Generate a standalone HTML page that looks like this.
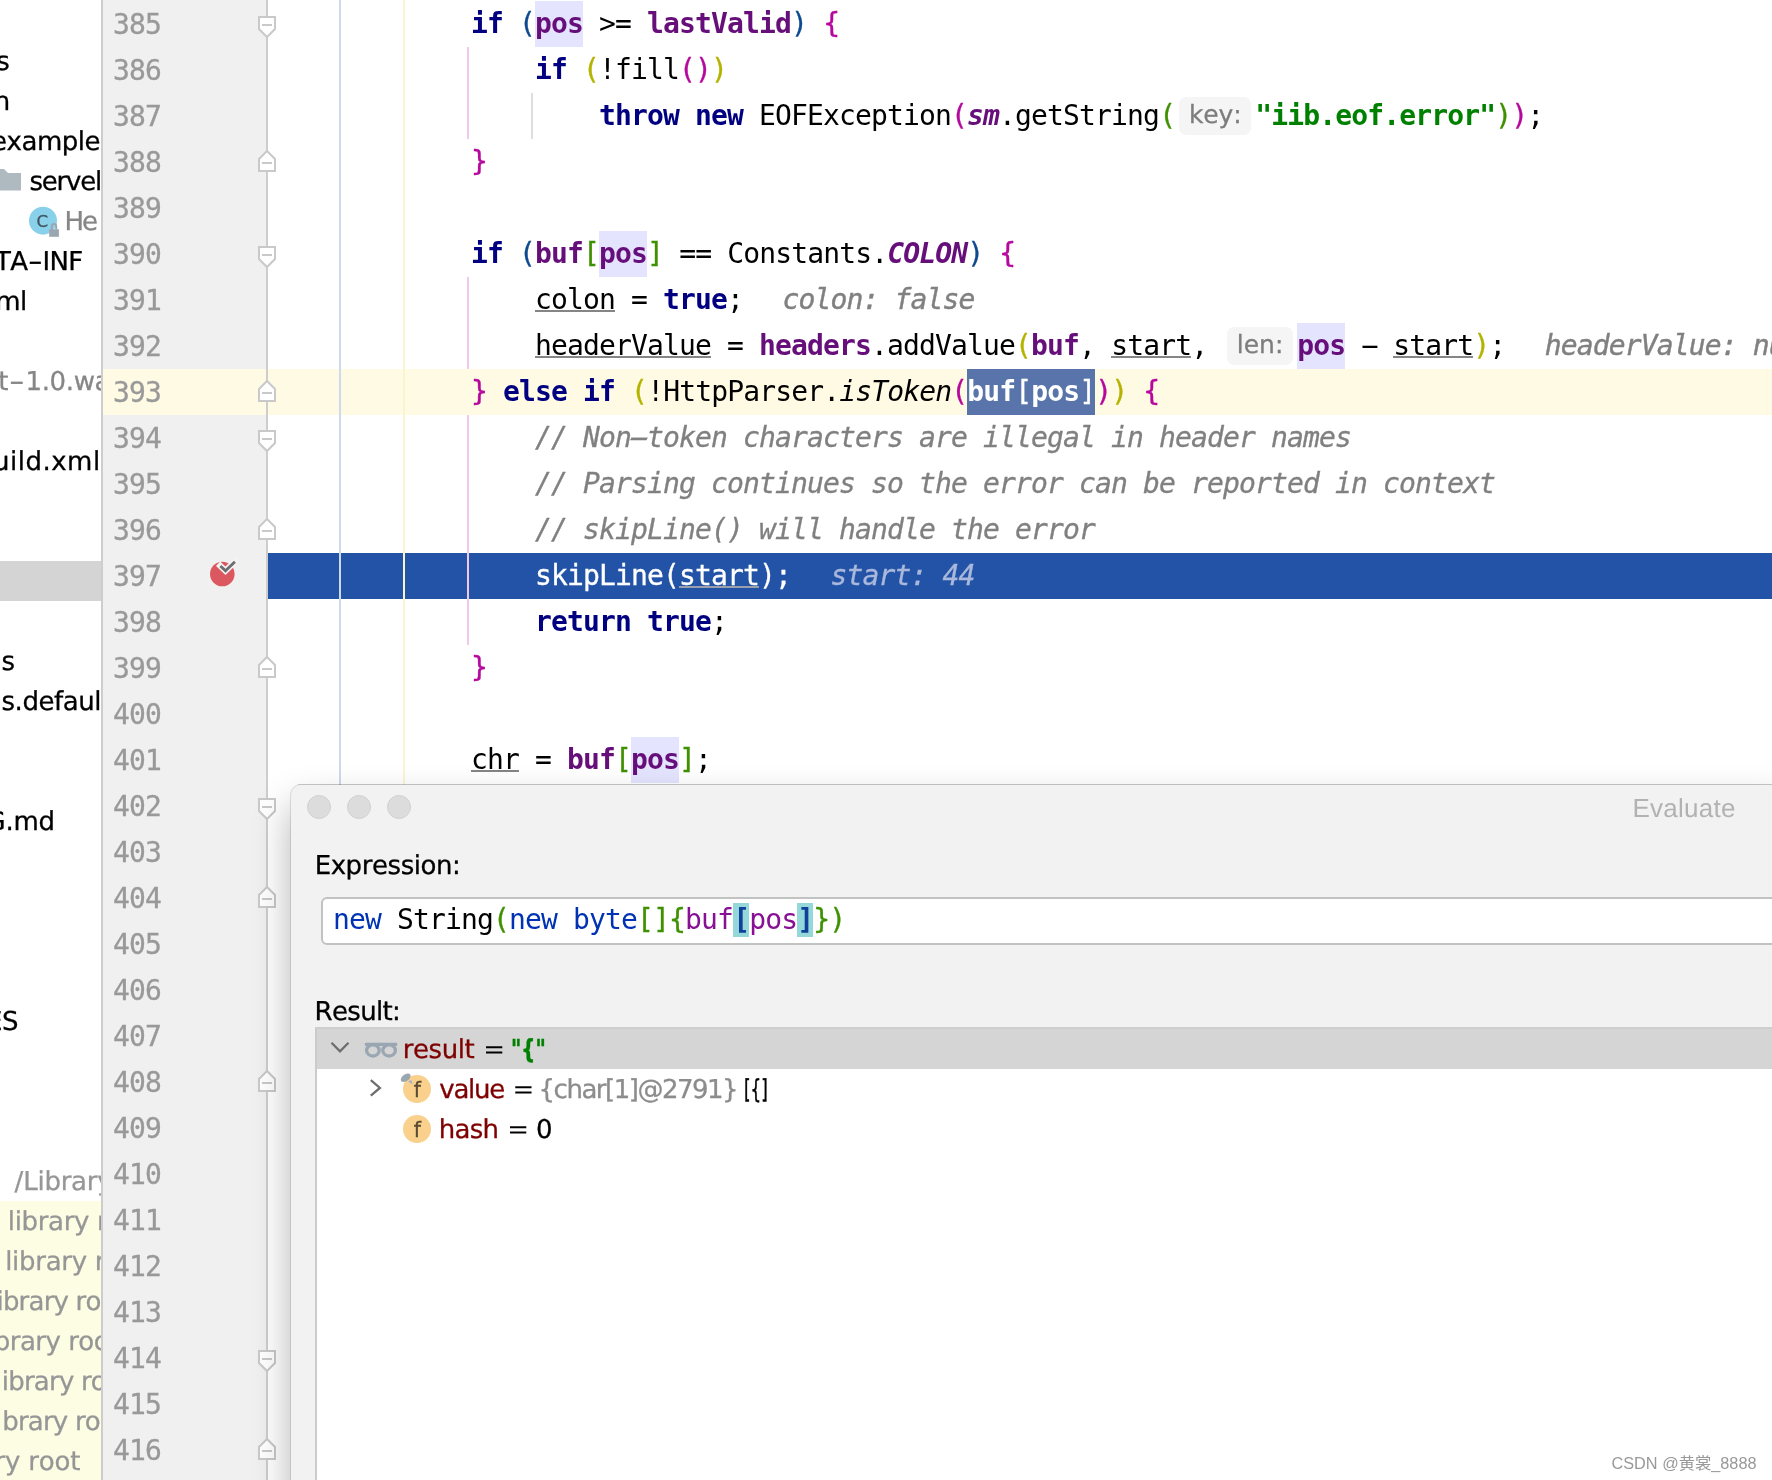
<!DOCTYPE html>
<html lang="en">
<head>
<meta charset="utf-8">
<title>Evaluate</title>
<style>
*{box-sizing:border-box;margin:0;padding:0}
html,body{width:1772px;height:1480px;overflow:hidden;background:#fff}
body{position:relative;font-family:"DejaVu Sans","Liberation Sans",sans-serif;color:#000}
#root{position:absolute;left:0;top:0;width:1772px;height:1480px;overflow:hidden;will-change:transform}
.abs{position:absolute}
#side{position:absolute;left:0;top:0;width:101px;height:1480px;background:#fff;overflow:hidden}
#side .t{position:absolute;white-space:pre;font-size:26px;line-height:40px;height:40px;font-kerning:none;-webkit-text-stroke:0.3px;text-rendering:geometricPrecision}
#side .g{color:#868686}
#side .g2{color:#969696}
.dt{position:absolute;white-space:pre;font-size:26px;line-height:40px;height:40px;font-kerning:none;-webkit-text-stroke:0.3px;text-rendering:geometricPrecision}
.mb{background:#94d8d9;color:#10409a;font-weight:bold;display:inline-block;height:34px;line-height:34px;margin-top:6px;vertical-align:top}
#sep{position:absolute;left:101px;top:0;width:2px;height:1480px;background:#cdcdcd}
#gut{position:absolute;left:103px;top:0;width:164px;height:1480px;background:#f0f0f0}
#foldline{position:absolute;left:266px;top:0;width:2px;height:1480px;background:#cdcdcd}
.ln{position:absolute;left:113px;width:60px;height:46px;line-height:46px;font:28px/46px "DejaVu Sans Mono","Liberation Mono",monospace;letter-spacing:-0.857px;color:#999}
.cl{position:absolute;left:279px;height:46px;line-height:46px;white-space:pre;font:28px/46px "DejaVu Sans Mono","Liberation Mono",monospace;letter-spacing:-0.857px;color:#000}
.c,.dv,.ln{-webkit-text-stroke:0.3px}
.k{color:#000080;font-weight:bold}
.f{color:#660e7a;font-weight:bold}
.sf{color:#660e7a;font-weight:bold;font-style:italic}
.s{color:#008000;font-weight:bold}
.c{color:#808080;font-style:italic}
.i{font-style:italic}
.u{display:inline-block;height:46px;vertical-align:top;background:linear-gradient(#858585,#858585) no-repeat 0 33px/100% 2px}
.dv{color:#808080;font-style:italic;margin-left:39.500px;-webkit-text-stroke:0.4px}
.b0,.b1,.b2,.b3,.b4{-webkit-text-stroke:0.35px}
.b1{color:#0e4a8e}.b2{color:#b5099d}.b3{color:#b4b300}.b4{color:#3f9101}
.hy{display:inline-block;transform:scaleX(2.1)}
.c .hy{transform:scaleX(2.2)}
.hl{background:#e4e4ff;display:inline-block;height:46px;vertical-align:top}
.sel{background:#5874ab;color:#fff;display:inline-block;height:46px;vertical-align:top}
.sel *{color:#fff}
.hint{display:inline-block;position:relative;vertical-align:top;height:38px;margin-top:4px;border-radius:7px;background:#f5f5f5;color:#7d7d7d;font:25px/38px "DejaVu Sans","Liberation Sans",sans-serif;font-kerning:none;letter-spacing:0}
.hint span{position:absolute;top:-1px;white-space:pre;-webkit-text-stroke:0.3px;text-rendering:geometricPrecision}
.guide{position:absolute;width:2px}
.fm{position:absolute;left:257px;width:20px;height:24px}
</style>
</head>
<body>
<div id="root">
<div class="abs" style="left:268px;top:0;width:1504px;height:1480px;background:#fff"></div>
<div id="gut"></div>
<div class="abs" style="left:103px;top:369px;width:1669px;height:46px;background:#fffae3"></div>
<div class="abs" style="left:268px;top:553px;width:1504px;height:46px;background:#2353a6"></div>
<div id="foldline"></div>
<div class="guide" style="left:339px;top:-45px;height:1564px;background:#cddaec;"></div>
<div class="guide" style="left:403px;top:-45px;height:1564px;background:#f6f6d0;"></div>
<div class="guide" style="left:467px;top:47px;height:92px;background:#f1c9ec;"></div>
<div class="guide" style="left:467px;top:277px;height:92px;background:#f1c9ec;"></div>
<div class="guide" style="left:467px;top:415px;height:230px;background:#f1c9ec;"></div>
<div class="guide" style="left:531px;top:93px;height:46px;background:#dedede;"></div>
<svg class="fm" style="top:15px" viewBox="0 0 20 24"><path d="M2 2H18V14L10 22L2 14Z" fill="#fff" stroke="#c9c9c9" stroke-width="2"/><path d="M5 10H15" stroke="#c9c9c9" stroke-width="2"/></svg>
<svg class="fm" style="top:245px" viewBox="0 0 20 24"><path d="M2 2H18V14L10 22L2 14Z" fill="#fff" stroke="#c9c9c9" stroke-width="2"/><path d="M5 10H15" stroke="#c9c9c9" stroke-width="2"/></svg>
<svg class="fm" style="top:429px" viewBox="0 0 20 24"><path d="M2 2H18V14L10 22L2 14Z" fill="#fff" stroke="#c9c9c9" stroke-width="2"/><path d="M5 10H15" stroke="#c9c9c9" stroke-width="2"/></svg>
<svg class="fm" style="top:797px" viewBox="0 0 20 24"><path d="M2 2H18V14L10 22L2 14Z" fill="#fff" stroke="#c9c9c9" stroke-width="2"/><path d="M5 10H15" stroke="#c9c9c9" stroke-width="2"/></svg>
<svg class="fm" style="top:1349px" viewBox="0 0 20 24"><path d="M2 2H18V14L10 22L2 14Z" fill="#fff" stroke="#c9c9c9" stroke-width="2"/><path d="M5 10H15" stroke="#c9c9c9" stroke-width="2"/></svg>
<svg class="fm" style="top:149px" viewBox="0 0 20 24"><path d="M2 22H18V10L10 2L2 10Z" fill="#fff" stroke="#c9c9c9" stroke-width="2"/><path d="M5 14H15" stroke="#c9c9c9" stroke-width="2"/></svg>
<svg class="fm" style="top:379px" viewBox="0 0 20 24"><path d="M2 22H18V10L10 2L2 10Z" fill="#fff" stroke="#c9c9c9" stroke-width="2"/><path d="M5 14H15" stroke="#c9c9c9" stroke-width="2"/></svg>
<svg class="fm" style="top:517px" viewBox="0 0 20 24"><path d="M2 22H18V10L10 2L2 10Z" fill="#fff" stroke="#c9c9c9" stroke-width="2"/><path d="M5 14H15" stroke="#c9c9c9" stroke-width="2"/></svg>
<svg class="fm" style="top:655px" viewBox="0 0 20 24"><path d="M2 22H18V10L10 2L2 10Z" fill="#fff" stroke="#c9c9c9" stroke-width="2"/><path d="M5 14H15" stroke="#c9c9c9" stroke-width="2"/></svg>
<svg class="fm" style="top:885px" viewBox="0 0 20 24"><path d="M2 22H18V10L10 2L2 10Z" fill="#fff" stroke="#c9c9c9" stroke-width="2"/><path d="M5 14H15" stroke="#c9c9c9" stroke-width="2"/></svg>
<svg class="fm" style="top:1069px" viewBox="0 0 20 24"><path d="M2 22H18V10L10 2L2 10Z" fill="#fff" stroke="#c9c9c9" stroke-width="2"/><path d="M5 14H15" stroke="#c9c9c9" stroke-width="2"/></svg>
<svg class="fm" style="top:1437px" viewBox="0 0 20 24"><path d="M2 22H18V10L10 2L2 10Z" fill="#fff" stroke="#c9c9c9" stroke-width="2"/><path d="M5 14H15" stroke="#c9c9c9" stroke-width="2"/></svg>
<div class="ln" style="top:2px">385</div>
<div class="ln" style="top:48px">386</div>
<div class="ln" style="top:94px">387</div>
<div class="ln" style="top:140px">388</div>
<div class="ln" style="top:186px">389</div>
<div class="ln" style="top:232px">390</div>
<div class="ln" style="top:278px">391</div>
<div class="ln" style="top:324px">392</div>
<div class="ln" style="top:370px">393</div>
<div class="ln" style="top:416px">394</div>
<div class="ln" style="top:462px">395</div>
<div class="ln" style="top:508px">396</div>
<div class="ln" style="top:554px">397</div>
<div class="ln" style="top:600px">398</div>
<div class="ln" style="top:646px">399</div>
<div class="ln" style="top:692px">400</div>
<div class="ln" style="top:738px">401</div>
<div class="ln" style="top:784px">402</div>
<div class="ln" style="top:830px">403</div>
<div class="ln" style="top:876px">404</div>
<div class="ln" style="top:922px">405</div>
<div class="ln" style="top:968px">406</div>
<div class="ln" style="top:1014px">407</div>
<div class="ln" style="top:1060px">408</div>
<div class="ln" style="top:1106px">409</div>
<div class="ln" style="top:1152px">410</div>
<div class="ln" style="top:1198px">411</div>
<div class="ln" style="top:1244px">412</div>
<div class="ln" style="top:1290px">413</div>
<div class="ln" style="top:1336px">414</div>
<div class="ln" style="top:1382px">415</div>
<div class="ln" style="top:1428px">416</div>
<svg class="abs" style="left:206px;top:556px;width:34px;height:34px" viewBox="0 0 34 34"><circle cx="16.300" cy="18" r="12.300" fill="#db5860"/><path d="M14.400 9.900L19.500 14.700L28.900 5.700" fill="none" stroke="#f3f3f3" stroke-width="6.200" stroke-linecap="square" stroke-linejoin="miter"/><path d="M14.400 9.900L19.500 14.700L28.900 5.700" fill="none" stroke="#6e6e6e" stroke-width="2.800"/></svg>
<div class="cl" style="top:1px">            <span class="k">if</span> <span class="b1">(</span><span class="hl"><span class="f">pos</span></span> &gt;= <span class="f">lastValid</span><span class="b1">)</span> <span class="b2">{</span></div>
<div class="cl" style="top:47px">                <span class="k">if</span> <span class="b3">(</span>!fill<span class="b2">()</span><span class="b3">)</span></div>
<div class="cl" style="top:93px">                    <span class="k">throw</span> <span class="k">new</span> EOFException<span class="b2">(</span><span class="sf">sm</span>.getString<span class="b4">(</span><span class="hint" style="width:72px;margin-left:4px;margin-right:4px"><span style="left:9.75px;letter-spacing:-0.087px">key:</span></span><span class="s">"iib.eof.error"</span><span class="b4">)</span><span class="b2">)</span>;</div>
<div class="cl" style="top:139px">            <span class="b2">}</span></div>
<div class="cl" style="top:231px">            <span class="k">if</span> <span class="b1">(</span><span class="f">buf</span><span class="b4">[</span><span class="hl"><span class="f">pos</span></span><span class="b4">]</span> == Constants.<span class="sf">COLON</span><span class="b1">)</span> <span class="b2">{</span></div>
<div class="cl" style="top:277px">                <span class="u">colon</span> = <span class="k">true</span>;<span class="dv">colon: false</span></div>
<div class="cl" style="top:323px">                <span class="u">headerValue</span> = <span class="f">headers</span>.addValue<span class="b3">(</span><span class="f">buf</span>, <span class="u">start</span>, <span class="hint" style="width:66px;margin-left:4px;margin-right:4px"><span style="left:9.56px;letter-spacing:0.038px">len:</span></span><span class="hl"><span class="f">pos</span></span> <span class="hy">-</span> <span class="u">start</span><span class="b3">)</span>;<span class="dv">headerValue: null</span></div>
<div class="cl" style="top:369px">            <span class="b2">}</span> <span class="k">else</span> <span class="k">if</span> <span class="b3">(</span>!HttpParser.<span class="i">isToken</span><span class="b2">(</span><span class="sel"><span class="f">buf</span><span class="b0">[</span><span class="f">pos</span><span class="b0">]</span></span><span class="b2">)</span><span class="b3">)</span> <span class="b2">{</span></div>
<div class="cl" style="top:415px">                <span class="c">// Non<span class="hy">-</span>token characters are illegal in header names</span></div>
<div class="cl" style="top:461px">                <span class="c">// Parsing continues so the error can be reported in context</span></div>
<div class="cl" style="top:507px">                <span class="c">// skipLine() will handle the error</span></div>
<div class="cl" style="top:553px"><span style="color:#fff;-webkit-text-stroke:0.3px">                skipLine(<span class="u" style="background-image:linear-gradient(#9a9fa9,#9a9fa9)">start</span>);<span style="color:#a9b8dc;font-style:italic;margin-left:39.500px">start: 44</span></span></div>
<div class="cl" style="top:599px">                <span class="k">return</span> <span class="k">true</span>;</div>
<div class="cl" style="top:645px">            <span class="b2">}</span></div>
<div class="cl" style="top:737px">            <span class="u">chr</span> = <span class="f">buf</span><span class="b4">[</span><span class="hl"><span class="f">pos</span></span><span class="b4">]</span>;</div>
<div id="side">
<div class="abs" style="left:0;top:561px;width:101px;height:40px;background:#d4d4d4"></div>
<div class="abs" style="left:0;top:1201px;width:101px;height:279px;background:#fdfde4"></div>
<div class="t " style="left:-3.69px;top:42px;letter-spacing:-0.500px">s</div>
<div class="t " style="left:-6.22px;top:82px;letter-spacing:-0.500px">n</div>
<div class="t " style="left:-8.92px;top:122px;letter-spacing:-0.479px">example</div>
<div class="t " style="left:29.38px;top:162px;letter-spacing:-1.174px">servel</div>
<div class="t g" style="left:64.56px;top:202px;letter-spacing:-2.038px">He</div>
<div class="t " style="left:-5.08px;top:242px;letter-spacing:-0.500px">TA</div>
<div class="t " style="left:28.39px;top:242px;transform:scaleX(1.564);transform-origin:0 50%">-</div>
<div class="t " style="left:42.46px;top:242px;letter-spacing:-0.646px">INF</div>
<div class="t " style="left:-4.86px;top:282px;letter-spacing:-0.500px">ml</div>
<div class="t g" style="left:-1.65px;top:362px;letter-spacing:0.000px">t</div>
<div class="t g" style="left:8.79px;top:362px;transform:scaleX(1.651);transform-origin:0 50%">-</div>
<div class="t g" style="left:25.46px;top:362px;letter-spacing:-0.346px">1.0.wa</div>
<div class="t " style="left:-7.02px;top:442px;letter-spacing:0.505px">uild.xml</div>
<div class="t " style="left:1.48px;top:642px;letter-spacing:-0.500px">s</div>
<div class="t " style="left:1.48px;top:682px;letter-spacing:-0.433px">s.defaul</div>
<div class="t " style="left:-14.40px;top:802px;letter-spacing:-0.287px">G.md</div>
<div class="t " style="left:-13.95px;top:1002px;letter-spacing:-0.500px">ES</div>
<div class="t g2" style="left:14.60px;top:1162px;letter-spacing:-0.227px">/Library</div>
<div class="t g2" style="left:7.86px;top:1202px;letter-spacing:-0.358px">library r</div>
<div class="t g2" style="left:5.16px;top:1242px;letter-spacing:-0.275px">library r</div>
<div class="t g2" style="left:-3.56px;top:1282px;letter-spacing:-0.794px">ibrary ro</div>
<div class="t g2" style="left:-6.30px;top:1322px;letter-spacing:-0.500px">brary roo</div>
<div class="t g2" style="left:1.84px;top:1362px;letter-spacing:-0.794px">ibrary ro</div>
<div class="t g2" style="left:2.27px;top:1402px;letter-spacing:-0.802px">brary ro</div>
<div class="t g2" style="left:-5.55px;top:1442px;letter-spacing:-0.174px">ry root</div>
<svg class="abs" style="left:-8px;top:168px;width:30px;height:24px" viewBox="0 0 30 24"><path d="M0 1H12L16 5H29V22.400H0Z" fill="#aeb9c0"/></svg>
<svg class="abs" style="left:28px;top:205px;width:34px;height:34px" viewBox="0 0 34 34"><circle cx="15" cy="15.700" r="14" fill="#89d1ea"/><text x="8.600" y="21.500" textLength="11.600" lengthAdjust="spacingAndGlyphs" font-family="DejaVu Sans, Liberation Sans, sans-serif" font-size="15.600" fill="#3f5560" stroke="#3f5560" stroke-width="0.300">C</text><rect x="21.200" y="24.200" width="9.700" height="7.600" fill="#9aa7b0"/><path d="M23.800 24.500v-3.200a2.200 2.200 0 0 1 4.400 0v3.200" fill="none" stroke="#9aa7b0" stroke-width="2"/></svg>
</div>
<div id="sep"></div>
<div id="dlg" class="abs" style="left:291px;top:785px;width:1500px;height:720px;background:#f2f2f2;border-radius:10px 0 0 0;box-shadow:0 0 0 1px rgba(0,0,0,0.10),0 20px 38px 0 rgba(0,0,0,0.30)">
<div class="abs" style="left:7px;top:-1px;width:1500px;height:1px;background:rgba(0,0,0,0.13)"></div>
<div class="abs" style="left:16px;top:10px;width:24px;height:24px;border-radius:50%;background:#dcdcdc;border:1px solid #d1d1d1"></div>
<div class="abs" style="left:56px;top:10px;width:24px;height:24px;border-radius:50%;background:#dcdcdc;border:1px solid #d1d1d1"></div>
<div class="abs" style="left:96px;top:10px;width:24px;height:24px;border-radius:50%;background:#dcdcdc;border:1px solid #d1d1d1"></div>
<div class="dt" style="left:1341.47px;top:3.0px;letter-spacing:0.258px;color:#b2b2b2;-webkit-text-stroke:0;font-family:'Liberation Sans','DejaVu Sans',sans-serif">Evaluate</div>
<div class="dt" style="left:23.66px;top:60.8px;letter-spacing:-0.426px;">Expression:</div>
<div class="abs" style="left:30px;top:112px;width:1490px;height:48px;background:#fff;border:2px solid #c2c2c2;border-radius:6px"></div>
<div class="abs" style="left:42px;top:112px;height:46px;white-space:pre;font:28px/46px 'DejaVu Sans Mono','Liberation Mono',monospace;letter-spacing:-0.857px"><span style="color:#0033b3">new</span> String<span class="b4">(</span><span style="color:#0033b3">new</span> <span style="color:#0033b3">byte</span><span class="b4">[]{</span><span style="color:#871094">buf</span><span class="mb">[</span><span style="color:#871094">pos</span><span class="mb">]</span><span class="b4">})</span></div>
<div class="dt" style="left:23.61px;top:206.9px;letter-spacing:-0.685px;">Result:</div>
<div class="abs" style="left:24px;top:242px;width:1490px;height:500px;background:#fff;border-left:2px solid #cbcbcb;border-top:2px solid #cecece"></div>
<div class="abs" style="left:26px;top:244px;width:1490px;height:40px;background:#d5d5d5"></div>
<svg class="abs" style="left:35px;top:251px;width:28px;height:22px" viewBox="326 1036 28 22"><path d="M331.500 1042.800L340 1051.400L348.500 1042.800" fill="none" stroke="#6e6e6e" stroke-width="2.300"/></svg>
<svg class="abs" style="left:69px;top:253px;width:42px;height:24px" viewBox="360 1038 42 24"><rect x="364.800" y="1042.800" width="32.400" height="3.100" rx="1" fill="#9aa7b3"/><ellipse cx="372.900" cy="1050.400" rx="6.300" ry="5.600" fill="none" stroke="#9aa7b3" stroke-width="3.300"/><ellipse cx="389.100" cy="1050.400" rx="6.300" ry="5.600" fill="none" stroke="#9aa7b3" stroke-width="3.300"/></svg>
<div class="dt" style="left:111.77px;top:244.9px;letter-spacing:-0.450px;color:#7f0000">result</div>
<div class="dt" style="left:192.16px;top:244.9px;letter-spacing:0.000px;-webkit-text-stroke:0">=</div>
<div class="dt" style="left:220.14px;top:244.9px;transform:scaleX(0.761);transform-origin:0 50%;color:#008000;font-weight:bold;-webkit-text-stroke:0.5px">"{"</div>
<svg class="abs" style="left:73px;top:289px;width:22px;height:28px" viewBox="364 1074 22 28"><path d="M370.800 1080.100L379.900 1087.900L370.800 1095.700" fill="none" stroke="#6e6e6e" stroke-width="2.300"/></svg>
<svg class="abs" style="left:106px;top:286px;width:38px;height:36px" viewBox="397 1071 38 36"><g transform="translate(0 0)"><circle cx="417" cy="1089" r="14" fill="#f9d18c"/><text x="417.300" y="1096.700" text-anchor="middle" font-family="DejaVu Sans, Liberation Sans, sans-serif" font-size="20.500" fill="#5b4a31" stroke="#5b4a31" stroke-width="0.300">f</text><ellipse cx="405.700" cy="1077.800" rx="5.600" ry="3.300" transform="rotate(-35 405.700 1077.800)" fill="#9aa7b0"/><path d="M408 1081.500L411.300 1080L412.800 1084.500Z" fill="#9fb4cc"/></g></svg>
<div class="dt" style="left:148.29px;top:284.9px;letter-spacing:-1.260px;color:#7f0000">value</div>
<div class="dt" style="left:221.56px;top:284.9px;letter-spacing:0.000px;-webkit-text-stroke:0">=</div>
<div class="dt" style="left:247.55px;top:284.9px;letter-spacing:-1.492px;color:#8c8c8c">{char[1]@2791}</div>
<div class="dt" style="left:452.69px;top:284.9px;transform:scaleX(0.647);transform-origin:0 50%;-webkit-text-stroke:0.5px">[{]</div>
<svg class="abs" style="left:106px;top:326px;width:38px;height:36px" viewBox="397 1111 38 36"><g transform="translate(0 40)"><circle cx="417" cy="1089" r="14" fill="#f9d18c"/><text x="417.300" y="1096.700" text-anchor="middle" font-family="DejaVu Sans, Liberation Sans, sans-serif" font-size="20.500" fill="#5b4a31" stroke="#5b4a31" stroke-width="0.300">f</text></g></svg>
<div class="dt" style="left:147.87px;top:324.9px;letter-spacing:-0.784px;color:#7f0000">hash</div>
<div class="dt" style="left:216.16px;top:324.9px;letter-spacing:0.000px;-webkit-text-stroke:0">=</div>
<div class="dt" style="left:244.88px;top:324.9px;letter-spacing:0.000px;">0</div>
</div>
<div class="abs" lang="zh-CN" style="right:15.500px;top:1451px;height:24px;line-height:24px;font:16.300px/24px 'Liberation Sans','Noto Sans CJK SC',sans-serif;color:#999;white-space:pre">CSDN @黄裳_8888</div>
</div>
</body>
</html>
